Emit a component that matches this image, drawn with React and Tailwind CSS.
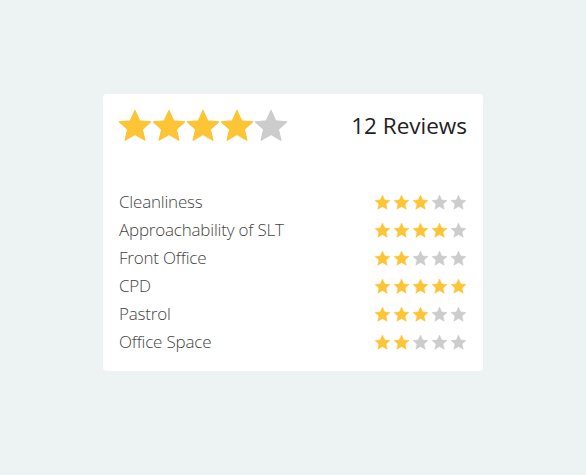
import React from "react";

const GOLD = "#fdc536";
const GRAY = "#cccccc";

function Star({ size, filled }) {
  return (
    <svg width={size} height={size} viewBox="0 0 24 24" className="block">
      <path
        d="M12 1.6l3.1 6.9 7.4.7-5.6 5 1.7 7.3L12 17.7l-6.6 3.8 1.7-7.3-5.6-5 7.4-.7z"
        fill={filled ? GOLD : GRAY}
        strokeLinejoin="round"
        stroke={filled ? GOLD : GRAY}
        strokeWidth="0.8"
      />
    </svg>
  );
}

function Stars({ n, size, className }) {
  return (
    <div className={className}>
      {[0, 1, 2, 3, 4].map((i) => (
        <Star key={i} size={size} filled={i < n} />
      ))}
    </div>
  );
}

const rows = [
  ["Cleanliness", 3],
  ["Approachability of SLT", 4],
  ["Front Office", 2],
  ["CPD", 5],
  ["Pastrol", 3],
  ["Office Space", 2],
];

export default function App() {
  return (
    <div
      className="min-h-[475px] w-full bg-[#edf3f3] pt-[94px]"
      style={{ fontFamily: "'Open Sans', 'Liberation Sans', sans-serif" }}
    >
      <div className="mx-auto w-[380px] rounded-[4px] bg-white px-[15px] pt-[14px] pb-[15px]">
        <div className="flex items-center justify-between">
          <Stars n={4} size={36} className="flex -ml-[1px] [&>svg]:-mr-[2px]" />
          <div className="text-[22.5px] font-normal text-[#222] leading-none pr-[1px]">12 Reviews</div>
        </div>
        <div className="mt-[44px] flex flex-col">
          {rows.map(([label, n]) => (
            <div key={label} className="flex h-[28px] items-center justify-between">
              <span className="text-[17px] font-light text-[#444] tracking-[-0.2px] pl-[1px]">{label}</span>
              <Stars n={n} size={17} className="flex gap-[2px] pr-[1px]" />
            </div>
          ))}
        </div>
      </div>
    </div>
  );
}
